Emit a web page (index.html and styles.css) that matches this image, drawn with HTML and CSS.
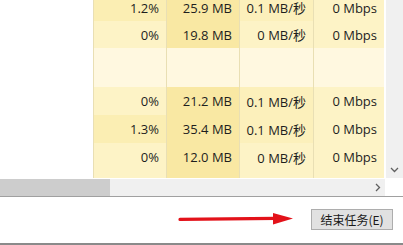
FILE: index.html
```html
<!DOCTYPE html>
<html>
<head>
<meta charset="utf-8">
<link rel="stylesheet" href="styles.css">
</head>
<body>
<div class="window">
  <div class="upper">
    <div class="table">
      <div class="row short">
        <div class="name"></div>
        <div class="cell hot">1.2%</div>
        <div class="cell mem">25.9 MB</div>
        <div class="cell warm">0.1 MB/秒</div>
        <div class="cell">0 Mbps</div>
      </div>
      <div class="row short">
        <div class="name"></div>
        <div class="cell">0%</div>
        <div class="cell mem">19.8 MB</div>
        <div class="cell">0 MB/秒</div>
        <div class="cell">0 Mbps</div>
      </div>
      <div class="row group">
        <div class="name"></div>
        <div class="cell"></div>
        <div class="cell"></div>
        <div class="cell"></div>
        <div class="cell"></div>
      </div>
      <div class="row">
        <div class="name"></div>
        <div class="cell">0%</div>
        <div class="cell mem">21.2 MB</div>
        <div class="cell warm">0.1 MB/秒</div>
        <div class="cell">0 Mbps</div>
      </div>
      <div class="row">
        <div class="name"></div>
        <div class="cell hot">1.3%</div>
        <div class="cell mem">35.4 MB</div>
        <div class="cell warm">0.1 MB/秒</div>
        <div class="cell">0 Mbps</div>
      </div>
      <div class="row">
        <div class="name"></div>
        <div class="cell">0%</div>
        <div class="cell mem">12.0 MB</div>
        <div class="cell">0 MB/秒</div>
        <div class="cell">0 Mbps</div>
      </div>
      <div class="row filler">
        <div class="name"></div>
        <div class="cell"></div>
        <div class="cell mem"></div>
        <div class="cell"></div>
        <div class="cell"></div>
      </div>
    </div>
    <div class="vscroll">
      <svg class="chev" width="9" height="6" viewBox="0 0 9 6"><path d="M1 1 L4.5 4.5 L8 1" fill="none" stroke="#606060" stroke-width="1.3"/></svg>
    </div>
  </div>
  <div class="hrow">
    <div class="hscroll">
      <div class="thumb"></div>
      <div class="track">
        <svg class="chev" width="6" height="9" viewBox="0 0 6 9"><path d="M1 1 L4.5 4.5 L1 8" fill="none" stroke="#606060" stroke-width="1.3"/></svg>
      </div>
    </div>
    <div class="corner"></div>
  </div>
  <div class="footer">
    <button class="endtask">结束任务(E)</button>
    <svg class="arrow" width="116" height="14" viewBox="0 0 116 14">
      <path d="M2 7.4 L98 6.4" stroke="#e3121a" stroke-width="3.2" stroke-linecap="round" fill="none"/>
      <path d="M95 1 L115 6.6 L95 12.5 Z" fill="#e3121a"/>
    </svg>
  </div>
</div>
</body>
</html>
```

FILE: styles.css
```css
html, body {
  margin: 0;
  padding: 0;
  background: #ffffff;
}
body {
  width: 403px;
  height: 245px;
  overflow: hidden;
  font-family: "Open Sans", "Noto Sans CJK SC", sans-serif;
  font-size: 13px;
  color: #1e1e1e;
}
.window {
  display: flex;
  flex-direction: column;
  width: 403px;
  height: 245px;
}
.upper {
  display: flex;
  height: 178px;
  flex-shrink: 0;
  overflow: hidden;
}
.table {
  flex: 1;
  display: flex;
  flex-direction: column;
  margin-top: -6px;
}
.row {
  display: grid;
  grid-template-columns: 93px 73px 73px 74px 71px 1px;
  height: 28px;
  flex-shrink: 0;
}
.row::after {
  content: "";
  background: #ffffff;
}
.row.short { height: 27px; }
.row.group { height: 39px; }
.row.filler { height: 20px; }
.name { background: #ffffff; }
.cell {
  background: #fdf3c6;
  border-left: 1px solid #e9dfb4;
  text-align: right;
  padding-right: 7px;
  display: flex;
  align-items: center;
  justify-content: flex-end;
  white-space: nowrap;
}
.cell.hot { background: #fbeeb3; }
.cell.mem { background: #f9e8a3; }
.cell.warm { background: #fcf0bb; }
.row.group .cell { background: #fff8e0; }
.vscroll {
  width: 17px;
  margin-left: 1px;
  background: #f0f0f0;
  display: flex;
  align-items: flex-end;
  justify-content: center;
  padding-bottom: 5px;
  box-sizing: border-box;
}
.hrow {
  display: flex;
  height: 17px;
  margin-top: 1px;
  flex-shrink: 0;
}
.hscroll {
  flex: 1;
  display: flex;
}
.thumb {
  width: 110px;
  background: #cdcdcd;
}
.track {
  flex: 1;
  background: #f0f0f0;
  display: flex;
  align-items: center;
  justify-content: flex-end;
  padding-right: 4px;
}
.corner {
  width: 18px;
  background: #ffffff;
}
.footer {
  position: relative;
  flex: 1;
  border-top: 1px solid #a0a0a0;
  border-bottom: 2px solid #8a8a8a;
  display: flex;
  justify-content: flex-end;
  align-items: flex-start;
  padding: 12px 10px 0 0;
}
.endtask {
  width: 82px;
  height: 21px;
  margin: 0;
  padding: 0;
  background: #e1e1e1;
  border: 1px solid #adadad;
  font-family: "Noto Sans CJK SC", sans-serif;
  font-size: 12px;
  color: #1a1a1a;
  line-height: 19px;
}
.arrow {
  position: absolute;
  left: 178px;
  top: 15px;
}
```
